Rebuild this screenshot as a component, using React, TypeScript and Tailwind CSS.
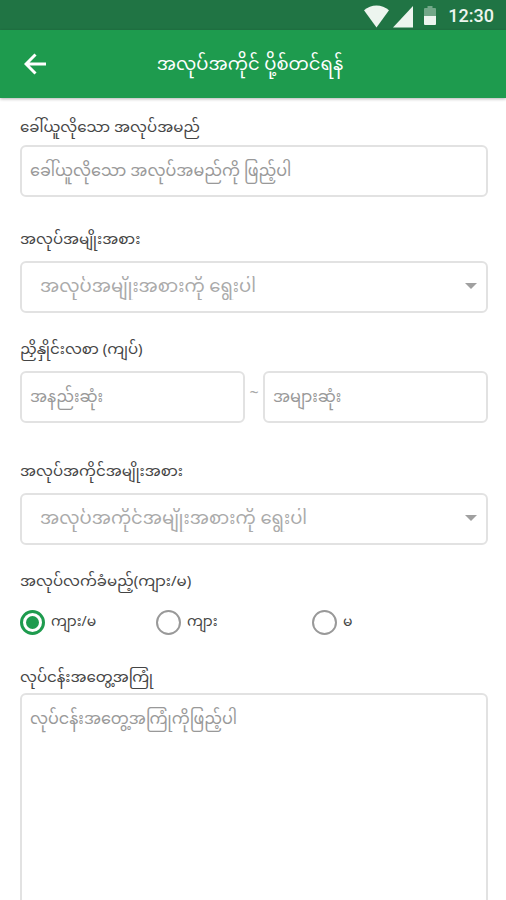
import React, { useState } from 'react';

const BOX =
  'block w-full h-13 rounded-md border-2 border-[#e2e2e2] bg-white px-2 text-[16px] leading-6 text-[#777] placeholder:text-[#999] placeholder:opacity-100 outline-none focus:border-[#1e9b4e]';
const LABEL = 'block text-[15px] leading-6 text-[#444] whitespace-nowrap';

const GENDERS = [
  { id: 'any', label: 'ကျား/မ', width: 'w-34' },
  { id: 'male', label: 'ကျား', width: 'w-39' },
  { id: 'female', label: 'မ', width: 'w-20' },
];

const StatusBar: React.FC = () => (
  <div className="flex h-[30px] shrink-0 items-center justify-end bg-[#207444] pt-0.5 pr-3 text-[#edf5ef]">
    <svg className="h-[23px] w-[25px]" viewBox="0 0 25 23" fill="currentColor" aria-hidden="true">
      <path d="M0 5.2C3.6 2 8 .4 12.5.4S21.4 2 25 5.2L12.5 22.5Z" />
    </svg>
    <svg className="ml-1 h-[23px] w-5" viewBox="0 0 20 23" fill="currentColor" aria-hidden="true">
      <path d="M20 1v21.5H0Z" />
    </svg>
    <svg className="ml-[11px] h-5 w-3" viewBox="0 0 12 20" fill="currentColor" aria-hidden="true">
      <path d="M3.5 0h5v2H11q1 0 1 1v7H0V3q0-1 1-1h2.5Z" opacity=".4" />
      <path d="M0 10h12v8q0 1-1 1H1q-1 0-1-1Z" />
    </svg>
    <span className="ml-3 font-['Roboto',sans-serif] text-[18px] leading-6 font-medium">12:30</span>
  </div>
);

interface SelectBoxProps {
  id: string;
  placeholder: string;
}

const SelectBox: React.FC<SelectBoxProps> = ({ id, placeholder }) => (
  <div className="relative">
    <select id={id} defaultValue="" className={`${BOX} appearance-none pt-0.5 pl-[18px] pr-10 text-[18px] text-[#aaa]`}>
      <option value="">{placeholder}</option>
    </select>
    <svg
      className="pointer-events-none absolute top-[22px] right-[11px] h-[6px] w-3"
      viewBox="0 0 12 6"
      fill="#a0a0a0"
      aria-hidden="true"
    >
      <path d="M0 0h12L6 6Z" />
    </svg>
  </div>
);

const App: React.FC = () => {
  const [gender, setGender] = useState('any');

  return (
    <div className="flex h-screen flex-col overflow-hidden bg-white font-['Noto_Sans_Myanmar','Noto_Sans',sans-serif]">
      <StatusBar />
      <header className="relative z-10 flex h-[68px] shrink-0 items-center bg-[#1e9b4e] px-6 text-white shadow-[0_1px_3px_rgba(0,0,0,0.3)]">
        <button type="button" aria-label="Back" className="w-[22px]">
          <svg className="h-[22px] w-[22px]" viewBox="0 0 22 22" fill="none" stroke="currentColor" strokeWidth="3" aria-hidden="true">
            <path d="M22 11H2M11.5 1.5 2 11l9.5 9.5" />
          </svg>
        </button>
        <h1 className="flex-1 pt-1 pr-7 text-center text-[18px] leading-8">အလုပ်အကိုင် ပို့စ်တင်ရန်</h1>
      </header>

      <main className="flex-1 overflow-y-auto [scrollbar-width:none]">
        <form className="flex flex-col pt-[19px] pr-[18px] pl-5">
          <div className="flex flex-col gap-1">
            <label htmlFor="title" className={LABEL}>ခေါ်ယူလိုသော အလုပ်အမည်</label>
            <input id="title" type="text" className={`${BOX} pt-0.5`} placeholder="ခေါ်ယူလိုသော အလုပ်အမည်ကို ဖြည့်ပါ" />
          </div>

          <div className="mt-8 flex flex-col gap-2">
            <label htmlFor="category" className={LABEL}>အလုပ်အမျိုးအစား</label>
            <SelectBox id="category" placeholder="အလုပ်အမျိုးအစားကို ရွေးပါ" />
          </div>

          <div className="mt-[26px] flex flex-col gap-2">
            <label htmlFor="salary-min" className={LABEL}>ညှိနှိုင်းလစာ (ကျပ်)</label>
            <div className="flex">
              <input id="salary-min" type="text" className={`${BOX} min-w-0 flex-1 pt-0.5`} placeholder="အနည်းဆုံး" />
              <span className="w-[18px] pt-3 text-center text-[16px] leading-6 text-[#aaa]">~</span>
              <input type="text" aria-label="အများဆုံး" className={`${BOX} min-w-0 flex-1 pt-0.5`} placeholder="အများဆုံး" />
            </div>
          </div>

          <div className="mt-[38px] flex flex-col gap-2">
            <label htmlFor="job-type" className={LABEL}>အလုပ်အကိုင်အမျိုးအစား</label>
            <SelectBox id="job-type" placeholder="အလုပ်အကိုင်အမျိုးအစားကို ရွေးပါ" />
          </div>

          <fieldset className="mt-[26px]">
            <legend className={LABEL}>အလုပ်လက်ခံမည့်(ကျား/မ)</legend>
            <div className="mt-[14px] flex">
              {GENDERS.map((item) => (
                <label key={item.id} className={`${item.width} flex h-[26px] items-center gap-1.5 text-[14px] leading-5 text-[#444]`}>
                  <input
                    type="radio"
                    name="gender"
                    checked={gender === item.id}
                    onChange={() => setGender(item.id)}
                    className="h-[25px] w-[25px] shrink-0 appearance-none rounded-full border-2 border-[#999] checked:border-[3px] checked:border-[#1e9b4e] checked:bg-[#1e9b4e] checked:bg-clip-content checked:p-[3px]"
                  />
                  <span className="pt-0.5">{item.label}</span>
                </label>
              ))}
            </div>
          </fieldset>

          <div className="mt-8 flex flex-col gap-0.5">
            <label htmlFor="experience" className={LABEL}>လုပ်ငန်းအတွေ့အကြုံ</label>
            <textarea id="experience" className={`${BOX} h-72 resize-none py-3.5`} placeholder="လုပ်ငန်းအတွေ့အကြုံကိုဖြည့်ပါ" />
          </div>
        </form>
      </main>
    </div>
  );
};

export default App;
